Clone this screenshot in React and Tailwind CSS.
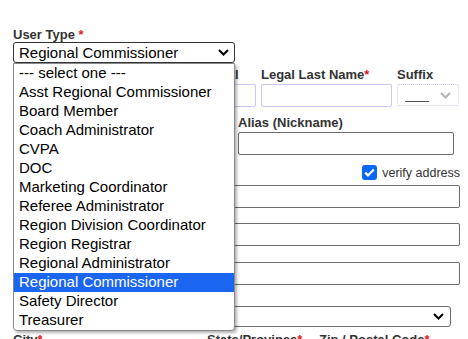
const OPTIONS = [
  '--- select one ---',
  'Asst Regional Commissioner',
  'Board Member',
  'Coach Administrator',
  'CVPA',
  'DOC',
  'Marketing Coordinator',
  'Referee Administrator',
  'Region Division Coordinator',
  'Region Registrar',
  'Regional Administrator',
  'Regional Commissioner',
  'Safety Director',
  'Treasurer',
]

const SELECTED = 'Regional Commissioner'

function Chevron({ className = 'text-black' }) {
  return (
    <svg className={className} width="11" height="7" viewBox="0 0 11 7" fill="none">
      <path d="M1 1l4.5 4.5L10 1" stroke="currentColor" strokeWidth="2" />
    </svg>
  )
}

function Label({ children, required, className = '' }) {
  return (
    <div className={`h-[15px] text-[13px] leading-[15px] font-bold text-[#333] whitespace-nowrap ${className}`}>
      {children}
      {required && <span className="text-[#e02020]">*</span>}
    </div>
  )
}

function TextBox({ className = '' }) {
  return <div className={`h-[23px] border border-[#6b6b6b] rounded-[2px] bg-white ${className}`} />
}

export default function App() {
  return (
    <div className="relative w-[468px] h-[339px] overflow-hidden bg-white font-['Liberation_Sans',Arial,sans-serif] text-black">
      {/* Form behind the open list */}
      <div className="pl-[13px] pr-[8px] pt-[27px] flex flex-col">
        <Label required>User Type </Label>
        <div className="w-[222px] h-[21px] border border-[#333] rounded-[3px] flex items-center justify-between pl-[5px] pr-[5px] text-[15px] leading-[19px]">
          <span>{SELECTED}</span>
          <Chevron />
        </div>

        {/* Name row */}
        <div className="flex mt-[4px]">
          <div className="w-[139px] flex flex-col gap-[2px]">
            <Label />
            <div className="h-[23px] border border-[#c9c7f2] rounded-[2px]" />
          </div>
          <div className="w-[100px] ml-[4px] flex flex-col gap-[2px]">
            <Label className="pl-[4px]">Middle Initial</Label>
            <div className="h-[23px] border border-[#c9c7f2] rounded-[2px]" />
          </div>
          <div className="w-[131px] ml-[5px] flex flex-col gap-[2px]">
            <Label required>Legal Last Name</Label>
            <div className="h-[23px] border border-[#c9c7f2] rounded-[2px]" />
          </div>
          <div className="w-[62px] ml-[5px] flex flex-col gap-[2px]">
            <Label>Suffix</Label>
            <div className="h-[22px] border border-dotted border-[#c9c7f2] rounded-[2px] flex items-center justify-between pl-[7px] pr-[7px]">
              <span className="w-[24px] h-[1px] mt-[12px] bg-[#555]" />
              <Chevron className="text-[#b5b5b5]" />
            </div>
          </div>
        </div>

        {/* Alias row */}
        <div className="flex gap-[4px] mt-[8px]">
          <div className="w-[221px] flex flex-col gap-[2px]">
            <Label />
            <TextBox />
          </div>
          <div className="w-[216px] flex flex-col gap-[2px]">
            <Label>Alias (Nickname)</Label>
            <TextBox />
          </div>
        </div>

        {/* Address */}
        <div className="flex justify-end items-center gap-[5px] mt-[9px] h-[16px]">
          <span className="w-[15px] h-[15px] rounded-[3px] bg-[#0a66f5] flex items-center justify-center">
            <svg width="11" height="9" viewBox="0 0 11 9" fill="none">
              <path d="M1.2 4.6l2.8 2.8L9.8 1.4" stroke="white" strokeWidth="2.2" />
            </svg>
          </span>
          <span className="text-[12.5px] leading-[15px] text-[#333] mt-[3px]">verify address</span>
        </div>
        <TextBox className="mt-[5px]" />
        <TextBox className="mt-[15px]" />
        <TextBox className="mt-[16px]" />
        <div className="mt-[21px] w-[438px] h-[21px] border border-[#6b6b6b] rounded-[3px] flex items-center justify-end pr-[6px]">
          <Chevron />
        </div>

        <div className="flex mt-[5px]">
          <div className="w-[194px]"><Label required>City</Label></div>
          <div className="w-[112px]"><Label required>State/Province</Label></div>
          <div><Label required>Zip / Postal Code</Label></div>
        </div>
      </div>

      {/* Open dropdown list */}
      <ul className="absolute left-[13px] top-[63px] w-[222px] border border-[#8a8a8a] rounded-b-[4px] bg-white shadow-[2px_2px_3px_rgba(0,0,0,0.3)]">
        {OPTIONS.map((o) => (
          <li
            key={o}
            className={`h-[19px] pl-[5px] text-[15px] leading-[18px] whitespace-nowrap ${
              o === SELECTED ? 'bg-[#1a66f0] text-white' : 'text-black'
            }`}
          >
            {o}
          </li>
        ))}
      </ul>
    </div>
  )
}
